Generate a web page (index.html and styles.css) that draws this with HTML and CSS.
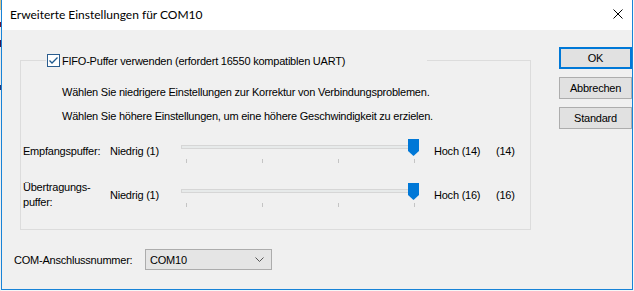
FILE: index.html
```html
<!DOCTYPE html>
<html lang="de">
<head>
<meta charset="utf-8">
<title>Erweiterte Einstellungen für COM10</title>
<link rel="stylesheet" href="styles.css">
</head>
<body>
<div class="window">
  <div class="titlebar">
    <span class="title">Erweiterte Einstellungen für COM10</span>
    <svg class="close" width="10" height="10" viewBox="0 0 10 10"><path d="M0.5 0.5 L9.5 9.5 M9.5 0.5 L0.5 9.5" stroke="#000" stroke-width="1" fill="none"/></svg>
  </div>
  <div class="client">
    <div class="main">
      <div class="group">
        <div class="legend">
          <span class="checkbox"><svg width="11" height="11" viewBox="0 0 11 11"><path d="M1.5 5.5 L4 8 L9.5 2.5" stroke="#1f5a8e" stroke-width="1.3" fill="none"/></svg></span>
          <span>FIFO-Puffer verwenden (erfordert 16550 kompatiblen UART)</span>
        </div>
        <p class="hint">Wählen Sie niedrigere Einstellungen zur Korrektur von Verbindungsproblemen.</p>
        <p class="hint second">Wählen Sie höhere Einstellungen, um eine höhere Geschwindigkeit zu erzielen.</p>
        <div class="row first">
          <span class="rlabel">Empfangspuffer:</span>
          <span class="low">Niedrig (1)</span>
          <div class="slider">
            <div class="track"></div>
            <i class="tick" style="left:5px"></i><i class="tick" style="left:81px"></i><i class="tick" style="left:157px"></i><i class="tick" style="left:233px"></i>
            <div class="thumb"></div>
          </div>
          <span class="high">Hoch (14)</span>
          <span class="val">(14)</span>
        </div>
        <div class="row">
          <span class="rlabel two">Übertragungs-<br>puffer:</span>
          <span class="low">Niedrig (1)</span>
          <div class="slider">
            <div class="track"></div>
            <i class="tick" style="left:5px"></i><i class="tick" style="left:81px"></i><i class="tick" style="left:157px"></i><i class="tick" style="left:233px"></i>
            <div class="thumb"></div>
          </div>
          <span class="high">Hoch (16)</span>
          <span class="val">(16)</span>
        </div>
      </div>
      <div class="comrow">
        <span class="comlabel">COM-Anschlussnummer:</span>
        <div class="combo">
          <span>COM10</span>
          <svg width="9" height="5" viewBox="0 0 9 5"><path d="M0.5 0.5 L4.5 4.5 L8.5 0.5" stroke="#555" stroke-width="1" fill="none"/></svg>
        </div>
      </div>
    </div>
    <div class="buttons">
      <div class="btn default">OK</div>
      <div class="btn">Abbrechen</div>
      <div class="btn">Standard</div>
    </div>
  </div>
</div>
</body>
</html>
```
FILE: styles.css
```css
html, body {
  margin: 0;
  padding: 0;
}
body {
  width: 634px;
  height: 291px;
  overflow: hidden;
  background-color: #f7f7f7;
  background-image: linear-gradient(to bottom, #d8c38a 0, #d8c38a 10px, #f4f4f4 10px, #f4f4f4 22px, #6b1436 22px, #6b1436 27px, #f0f0f0 27px, #f0f0f0 40px, #3a1450 40px, #3a1450 47px, #e8e8e8 47px, #e8e8e8 85px, #2a3570 85px, #2a3570 90px, #efefef 90px);
  background-size: 1px 100%;
  background-repeat: no-repeat;
  font-family: "Liberation Sans", Arial, sans-serif;
  font-size: 11px;
  letter-spacing: -0.22px;
  color: #000;
}
.window {
  margin-left: 1px;
  width: 630px;
  height: 289px;
  border: 1px solid #1883d7;
  border-top: none;
  background: #f0f0f0;
  display: flex;
  flex-direction: column;
}
.titlebar {
  height: 30px;
  background: #fff;
  display: flex;
  align-items: center;
  justify-content: space-between;
  padding: 0 9px 0 8px;
}
.title {
  font-family: Lato, "Noto Sans", sans-serif;
  font-size: 12px;
  letter-spacing: 0;
  margin-top: -1px;
}
.close {
  display: block;
  margin-top: -2px;
}
.client {
  flex: 1;
  display: flex;
}
.main {
  padding-left: 12px;
  width: 535px;
}
.group {
  position: relative;
  margin: 30px 0 0 6px;
  width: 511px;
  height: 170px;
  border: 1px solid #dcdcdc;
  box-sizing: border-box;
  padding-top: 25px;
}
.legend {
  position: absolute;
  left: 25px;
  top: -8px;
  width: 381px;
  height: 15px;
  background: #f0f0f0;
  display: flex;
  align-items: center;
  gap: 2px;
}
.checkbox {
  width: 11px;
  height: 11px;
  border: 1px solid #2a5d8f;
  background: #fff;
  margin-left: 1px;
  display: flex;
}
.checkbox svg { display: block; }
.hint {
  margin: 0 0 0 41px;
  line-height: 13px;
}
.hint.second {
  margin-top: 11px;
}
.row {
  display: flex;
  align-items: center;
  height: 24px;
  margin-top: 20px;
  padding-left: 2px;
}
.row.first {
  margin-top: 16px;
}
.rlabel {
  width: 87px;
  line-height: 15px;
}
.low {
  width: 71px;
}
.slider {
  position: relative;
  width: 238px;
  height: 24px;
  align-self: flex-start;
}
.track {
  position: absolute;
  left: 0;
  top: 6px;
  width: 238px;
  height: 4px;
  box-sizing: border-box;
  border: 1px solid #d6d6d6;
  background: #e7eaea;
}
.tick {
  position: absolute;
  top: 20px;
  width: 1px;
  height: 4px;
  background: #c4c4c4;
}
.thumb {
  position: absolute;
  left: 227px;
  top: 0;
  width: 11px;
  height: 17px;
  background: #0078d7;
  clip-path: polygon(0 0, 100% 0, 100% 70%, 50% 100%, 0 70%);
}
.high {
  margin-left: 15px;
  width: 62px;
}
.comrow {
  display: flex;
  align-items: center;
  margin-top: 19px;
}
.comlabel {
  width: 131px;
}
.combo {
  width: 127px;
  height: 21px;
  box-sizing: border-box;
  border: 1px solid #acacac;
  background: #e5e5e5;
  display: flex;
  align-items: center;
  justify-content: space-between;
  padding: 0 7px 0 4px;
}
.combo svg { display: block; }
.buttons {
  display: flex;
  flex-direction: column;
  gap: 8px;
  margin-top: 17px;
  margin-left: 12px;
}
.btn {
  width: 73px;
  height: 22px;
  box-sizing: border-box;
  border: 1px solid #adadad;
  background: #e1e1e1;
  display: flex;
  align-items: center;
  justify-content: center;
}
.btn.default {
  border: 2px solid #0078d7;
}
```
